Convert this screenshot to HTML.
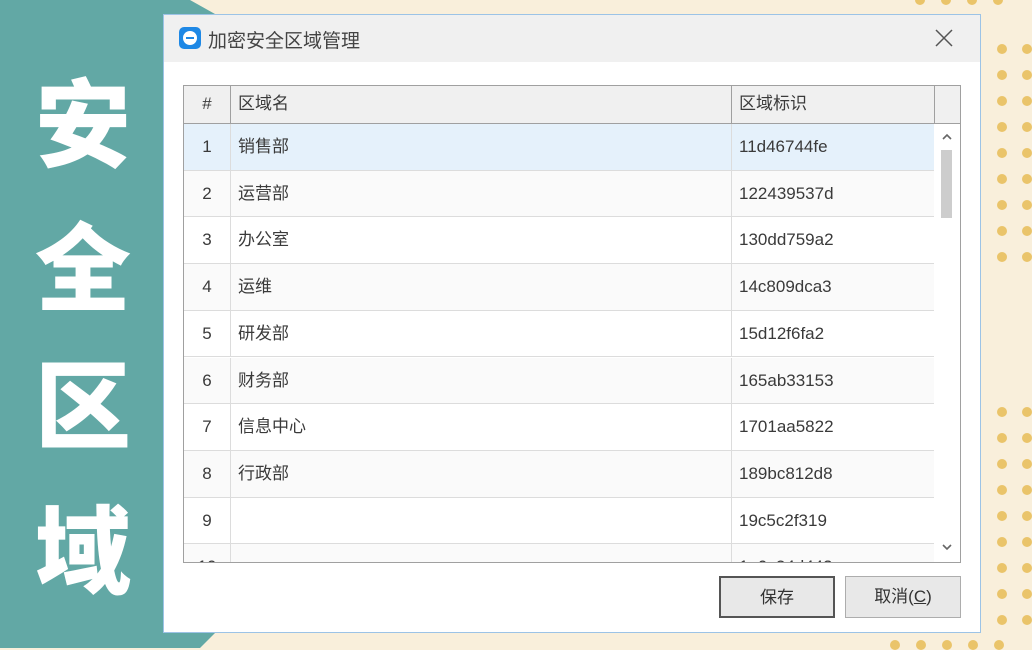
<html><head><style>
body{margin:0;width:1032px;height:648px;overflow:hidden;background:#f9efdb;position:relative;font-family:"Liberation Sans","Noto Sans CJK SC",sans-serif}
.teal{position:absolute;left:0;top:0;width:215px;height:648px;background:#62a8a5;clip-path:polygon(0 0,190px 0,215px 14px,215px 633px,200px 648px,0 648px)}
.big{position:absolute;left:0;width:166px;text-align:center;color:#fff;font-size:96px;font-weight:900;font-family:"Noto Sans CJK SC",sans-serif;line-height:1}
.dot{position:absolute;width:10px;height:10px;border-radius:50%;background:#eac46a}
.dlg{position:absolute;left:163px;top:14px;width:818px;height:619px;background:#fff;border:1px solid #9cc3e6;box-sizing:border-box}
.tb{height:47px;background:#f0f0f0;position:relative}
.tb .t{position:absolute;left:44px;top:11px;font-size:19px;color:#444}
.ico{position:absolute;left:15px;top:12px;width:22px;height:22px;border-radius:5px;background:#1e88e5}
.ico:after{content:"";position:absolute;left:4px;top:4px;width:14px;height:14px;border-radius:50%;background:#fff}
.ico:before{content:"";position:absolute;left:7px;top:10px;width:8px;height:2px;background:#1e88e5;z-index:2}
.tbl{position:absolute;left:19px;top:70px;width:778px;height:478px;border:1px solid #a0a0a0;box-sizing:border-box;overflow:hidden}
.row{position:absolute;left:0;width:750px;height:46.7px;border-bottom:1px solid #dcdcdc;box-sizing:border-box;font-size:17px;color:#3a3a3a}
.row div{position:absolute;top:0;height:100%;line-height:45px;border-right:1px solid #dcdcdc;box-sizing:border-box}
.c1{left:0;width:47px;text-align:center}.c2{left:47px;width:501px;padding-left:7px}.c3{left:548px;width:203px;padding-left:7px}
.hd{background:#f0f0f0;height:38px;top:0;border-bottom:1px solid #a0a0a0;width:776px}
.hd div{line-height:36px;border-right:1px solid #a0a0a0}
.sb{position:absolute;left:750px;top:38px;width:26px;height:440px;background:#fff}
.btn{position:absolute;top:561px;height:42px;border:1px solid #adadad;background:#e8e8e8;box-sizing:border-box;font-size:17px;color:#333;text-align:center;line-height:40px}
</style></head><body>
<div class="teal"></div>
<div class="big" style="top:70px">安</div>
<div class="big" style="top:214px">全</div>
<div class="big" style="top:352px">区</div>
<div class="big" style="top:497px">域</div>
<div id="dots"></div>
<div class="dlg">
<div class="tb"><div class="ico"></div><div class="t">加密安全区域管理</div>
<svg style="position:absolute;left:771px;top:14px" width="18" height="18" viewBox="0 0 18 18"><path d="M1 1L17 17M17 1L1 17" stroke="#555" stroke-width="1.5"/></svg></div>
<div class="tbl">
<div class="row hd"><div class="c1">#</div><div class="c2">区域名</div><div class="c3">区域标识</div></div>
<div class="row" style="top:38px;background:#e5f1fb"><div class="c1">1</div><div class="c2">销售部</div><div class="c3">11d46744fe</div></div>
<div class="row" style="top:84.7px;background:#fafafa"><div class="c1">2</div><div class="c2">运营部</div><div class="c3">122439537d</div></div>
<div class="row" style="top:131.4px"><div class="c1">3</div><div class="c2">办公室</div><div class="c3">130dd759a2</div></div>
<div class="row" style="top:178.1px;background:#fafafa"><div class="c1">4</div><div class="c2">运维</div><div class="c3">14c809dca3</div></div>
<div class="row" style="top:224.8px"><div class="c1">5</div><div class="c2">研发部</div><div class="c3">15d12f6fa2</div></div>
<div class="row" style="top:271.5px;background:#fafafa"><div class="c1">6</div><div class="c2">财务部</div><div class="c3">165ab33153</div></div>
<div class="row" style="top:318.2px"><div class="c1">7</div><div class="c2">信息中心</div><div class="c3">1701aa5822</div></div>
<div class="row" style="top:364.9px;background:#fafafa"><div class="c1">8</div><div class="c2">行政部</div><div class="c3">189bc812d8</div></div>
<div class="row" style="top:411.6px"><div class="c1">9</div><div class="c2"></div><div class="c3">19c5c2f319</div></div>
<div class="row" style="top:458.3px;background:#fafafa"><div class="c1">10</div><div class="c2"></div><div class="c3">1a0c24d443</div></div>
<div class="sb">
<svg style="position:absolute;left:8px;top:9px" width="10" height="7"><path d="M1 6L5 2L9 6" stroke="#666" stroke-width="1.6" fill="none"/></svg>
<div style="position:absolute;left:7px;top:26px;width:11px;height:68px;background:#cdcdcd"></div>
<svg style="position:absolute;left:8px;top:420px" width="10" height="7"><path d="M1 1L5 5L9 1" stroke="#666" stroke-width="1.6" fill="none"/></svg></div>
</div>
<div class="btn" style="left:555px;width:116px;border:2px solid #555">保存</div>
<div class="btn" style="left:681px;width:116px">取消(<u>C</u>)</div>
</div>
<script>
var h='';
for(var y=49;y<=260;y+=26){h+='<div class="dot" style="left:997px;top:'+(y-5)+'px"></div><div class="dot" style="left:1022px;top:'+(y-5)+'px"></div>';}
for(var y=412;y<=622;y+=26){h+='<div class="dot" style="left:997px;top:'+(y-5)+'px"></div><div class="dot" style="left:1022px;top:'+(y-5)+'px"></div>';}
for(var x=895;x<=1000;x+=26){h+='<div class="dot" style="left:'+(x-5)+'px;top:640px"></div>';}
for(var x=920;x<=1000;x+=26){h+='<div class="dot" style="left:'+(x-5)+'px;top:-5px"></div>';}
document.getElementById('dots').innerHTML=h;
</script>
</body></html>
